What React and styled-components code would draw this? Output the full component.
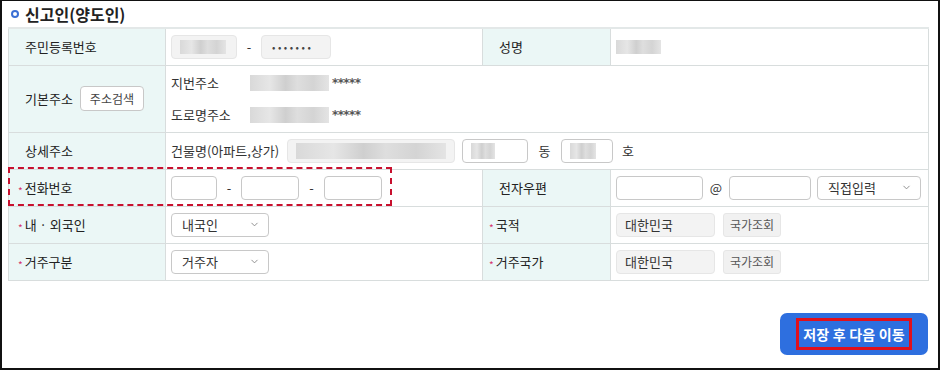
import styled, { createGlobalStyle } from "styled-components";
import { ChevronDown } from "lucide-react";

const GlobalStyle = createGlobalStyle`
  body {
    margin: 0;
    font-family: "Noto Sans CJK KR", "Noto Sans", "Liberation Sans", sans-serif;
    color: #333;
    background: #fff;
  }
`

const Frame = styled.div`
  width: 940px;
  height: 370px;
  box-sizing: border-box;
  border: 2px solid #111;
  border-top-width: 1px;
  padding: 0 10px 0 6px;
  display: flex;
  flex-direction: column;
`

const Title = styled.h2`
  margin: 0;
  height: 26px;
  display: flex;
  align-items: center;
  gap: 6px;
  font-size: 16px;
  font-weight: 700;
  color: #222;
  padding-left: 3px;
`

const Dot = styled.span`
  width: 4px;
  height: 4px;
  border-radius: 50%;
  border: 2px solid #3b6fd4;
`

const Table = styled.table`
  width: 920px;
  border-collapse: collapse;
  table-layout: fixed;
  font-size: 13px;
  color: #333;
  border-top: 2px solid #e3e8e8;
`

const Th = styled.th`
  position: relative;
  text-align: left;
  font-weight: 400;
  background: #ebf7f6;
  border: 1px solid #d8dddd;
  height: ${({ tall }) => (tall ? "67px" : "37px")};
  padding: 0 0 0 ${({ pl }) => pl ?? 16}px;
  box-sizing: border-box;
  color: #222;
`

const Td = styled.td`
  border: 1px solid #d8dddd;
  padding: 0 5px;
  box-sizing: border-box;
`

const Req = styled.span`
  position: relative;
  top: 2px;
  color: #d6336c;
  font-size: 10px;
  margin-right: 2px;
  margin-left: -8px;
`

const Line = styled.div`
  display: flex;
  align-items: center;
  gap: ${({ gap }) => gap ?? 8}px;
`

const Stack = styled.div`
  display: flex;
  flex-direction: column;
  gap: 13px;
`

const Cell = styled.span`
  flex: none;
  width: ${({ w }) => w}px;
`

const Box = styled.div`
  flex: none;
  width: ${({ w }) => w}px;
  height: 24px;
  border: 1px solid ${({ gray }) => (gray ? "#e6e6e6" : "#c8c8c8")};
  background: ${({ gray }) => (gray ? "#f3f3f3" : "#fff")};
  border-radius: 4px;
  box-sizing: border-box;
  display: flex;
  align-items: center;
  padding: 0 8px;
  font-size: 13px;
  color: #333;
`

const Blur = styled.div`
  width: ${({ w }) => w}px;
  height: ${({ h }) => h ?? 16}px;
  background: linear-gradient(90deg, #d9d9d9 0%, #e6e6e6 25%, #cfcfcf 45%, #dedede 60%, #d4d4d4 80%, #e4e4e4 100%);
`

const Dots = styled.span`
  font-size: 10px;
  letter-spacing: 2.5px;
  color: #444;
  padding-left: 2px;
`

const Stars = styled.span`
  font-family: "DejaVu Sans", sans-serif;
  font-size: 12px;
  font-weight: 700;
  color: #555;
  margin-left: 3px;
  letter-spacing: -0.6px;
`

const Sep = styled.span`
  flex: none;
  width: ${({ w }) => w ?? 16}px;
  text-align: ${({ left }) => (left ? "right" : "center")};
  color: #333;
`

const SmallBtn = styled.button`
  height: 25px;
  padding: 0 9px;
  border: 1px solid #c8c8c8;
  border-radius: 4px;
  background: #fff;
  font-family: inherit;
  font-size: 12px;
  color: #444;
  margin-left: 7px;
`

const GrayBtn = styled.span`
  height: 24px;
  padding: 0 6px;
  border-radius: 3px;
  background: #f1f1f1;
  border: 1px solid #e6e6e6;
  box-sizing: border-box;
  display: flex;
  align-items: center;
  font-size: 12px;
  color: #555;
`

const Select = styled(Box)`
  justify-content: space-between;
  padding: 0 8px 0 10px;
  color: #333;
`

const Highlight = styled.div`
  position: absolute;
  left: -1px;
  top: -3px;
  width: 384px;
  height: 39px;
  border: 2px dashed #c8102e;
  box-sizing: border-box;
  pointer-events: none;
`

const Footer = styled.div`
  display: flex;
  justify-content: flex-end;
  margin-top: 32px;
`

const SaveBtn = styled.button`
  width: 148px;
  height: 42px;
  border: none;
  border-radius: 7px;
  background: #2e6fdf;
  display: flex;
  align-items: center;
  justify-content: center;
  font-family: inherit;
`

const SaveLabel = styled.span`
  border: 3px solid #e0101c;
  padding: 3px 4px;
  color: #fff;
  font-size: 14px;
  font-weight: 700;
  letter-spacing: 0.2px;
`

const Chev = () => <ChevronDown size={11} color="#888" strokeWidth={2} />

export default function App() {
  return (
    <Frame>
      <GlobalStyle />
      <Title><Dot />신고인(양도인)</Title>
      <Table>
        <colgroup>
          <col style={{ width: 157 }} />
          <col style={{ width: 317 }} />
          <col style={{ width: 128 }} />
          <col style={{ width: 318 }} />
        </colgroup>
        <tbody>
          <tr>
            <Th>주민등록번호</Th>
            <Td>
              <Line gap={0}>
                <Box w={66} gray><Blur w={46} h={14} /></Box>
                <Sep w={24}>-</Sep>
                <Box w={70} gray><Dots>•••••••</Dots></Box>
              </Line>
            </Td>
            <Th>성명</Th>
            <Td><Blur w={45} h={14} /></Td>
          </tr>
          <tr>
            <Th tall>
              <Line gap={0}>기본주소<SmallBtn>주소검색</SmallBtn></Line>
            </Th>
            <Td colSpan={3}>
              <Stack>
                <Line gap={0}>
                  <Cell w={79}>지번주소</Cell>
                  <Blur w={79} /><Stars>*****</Stars>
                </Line>
                <Line gap={0}>
                  <Cell w={79}>도로명주소</Cell>
                  <Blur w={79} /><Stars>*****</Stars>
                </Line>
              </Stack>
            </Td>
          </tr>
          <tr>
            <Th>상세주소</Th>
            <Td colSpan={3}>
              <Line gap={0}>
                <Cell w={116}>건물명(아파트,상가)</Cell>
                <Box w={168} gray><Blur w={150} /></Box>
                <Cell w={7} />
                <Box w={66}><Blur w={24} /></Box>
                <Sep w={33}>동</Sep>
                <Box w={52}><Blur w={26} /></Box>
                <Sep w={21} left>호</Sep>
              </Line>
            </Td>
          </tr>
          <tr>
            <Th pl={17}>
              <Highlight />
              <Req>*</Req>전화번호
            </Th>
            <Td>
              <Line gap={0}>
                <Box w={46} />
                <Sep w={24}>-</Sep>
                <Box w={58} />
                <Sep w={25}>-</Sep>
                <Box w={58} />
              </Line>
            </Td>
            <Th>전자우편</Th>
            <Td>
              <Line gap={0}>
                <Box w={87} />
                <Sep w={26}>@</Sep>
                <Box w={82} />
                <Cell w={6} />
                <Select w={104}>직접입력<Chev /></Select>
              </Line>
            </Td>
          </tr>
          <tr>
            <Th pl={17}><Req>*</Req>내 · 외국인</Th>
            <Td><Select w={98}>내국인<Chev /></Select></Td>
            <Th pl={14}><Req>*</Req>국적</Th>
            <Td>
              <Line gap={8}>
                <Box w={99} gray>대한민국</Box>
                <GrayBtn>국가조회</GrayBtn>
              </Line>
            </Td>
          </tr>
          <tr>
            <Th pl={17}><Req>*</Req>거주구분</Th>
            <Td><Select w={98}>거주자<Chev /></Select></Td>
            <Th pl={14}><Req>*</Req>거주국가</Th>
            <Td>
              <Line gap={8}>
                <Box w={99} gray>대한민국</Box>
                <GrayBtn>국가조회</GrayBtn>
              </Line>
            </Td>
          </tr>
        </tbody>
      </Table>
      <Footer>
        <SaveBtn><SaveLabel>저장 후 다음 이동</SaveLabel></SaveBtn>
      </Footer>
    </Frame>
  )
}
